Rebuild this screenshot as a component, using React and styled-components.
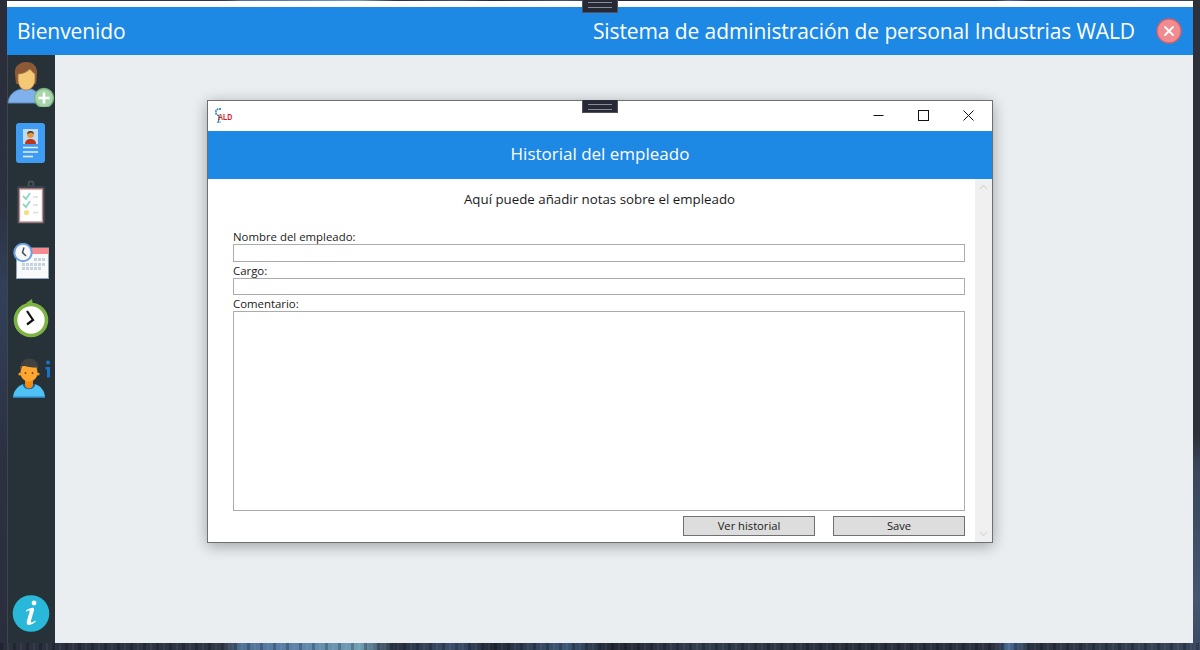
import React from "react";
import styled, { createGlobalStyle } from "styled-components";

const Global = createGlobalStyle`
  html, body { margin: 0; padding: 0; background: #262a36; }
  * { box-sizing: border-box; }
`;

const Desktop = styled.div`
  position: relative;
  width: 1200px;
  height: 650px;
  overflow: hidden;
  padding: 1px 7px 7px;
  font-family: "Open Sans", "Noto Sans", sans-serif;
  background:
    repeating-linear-gradient(90deg, rgba(0, 0, 0, 0.22) 0 3px, transparent 3px 7px, rgba(255, 255, 255, 0.05) 7px 9px, transparent 9px 13px) left bottom / 100% 7px no-repeat,
    linear-gradient(180deg, #2e313b 0, #2e313b 67%, #39465b 72%, #465670 92%, #3b4a62 100%) right top / 7px 100% no-repeat,
    linear-gradient(180deg, #2a2c38 0, #2c3040 30%, #33405a 45%, #2c3142 70%, #2a2e3c 100%) left top / 7px 100% no-repeat,
    linear-gradient(90deg,
      #2b303e 0, #2f3646 18%, #3a4454 19%, #4f7196 20%, #5d84ac 25%, #6fa0b4 30%, #2a3040 33%, #3c5170 38%,
      #242834 41%, #3d5878 47%, #242834 51%, #333d4e 58%, #2a2f3c 70%, #2c3240 83%, #4a6c96 84%, #2c3240 86%, #39465b 100%);
`;

const AppWindow = styled.div`
  display: flex;
  flex-direction: column;
  width: 1186px;
  height: 642px;
`;

const TopStrip = styled.div`
  height: 6px;
  background: #fff;
`;

const Header = styled.header`
  display: flex;
  align-items: center;
  height: 48px;
  padding: 0 11px 0 10px;
  background: #1e88e5;
  color: #fff;
`;

const WelcomeText = styled.div`
  font-size: 21px;
  line-height: 48px;
  letter-spacing: -0.1px;
`;

const SystemTitle = styled.div`
  margin-left: auto;
  margin-right: 21px;
  font-size: 21px;
  line-height: 48px;
  letter-spacing: -0.1px;
`;

const CloseCircle = styled.svg`
  display: block;
  width: 26px;
  height: 26px;
`;

const Handle = styled.div`
  position: absolute;
  left: 582px;
  top: ${(p) => p.$top}px;
  width: 36px;
  height: 13px;
  background: #272a36;
  border: 1px solid #4f525c;
  border-top: 0;
  &::before {
    content: "";
    display: block;
    width: 24px;
    height: 4px;
    margin: ${(p) => p.$inset}px auto 0;
    border-top: 1px solid #8a8d96;
    border-bottom: 1px solid #8a8d96;
  }
`;

const Workspace = styled.div`
  display: flex;
  flex: 1;
  min-height: 0;
`;

const Rail = styled.nav`
  display: flex;
  flex-direction: column;
  gap: 16px;
  width: 48px;
  padding: 6px 0 11px;
  background: #263238;
  border-left: 1px solid #3c464c;
`;

const RailIcon = styled.svg`
  display: block;
  flex: none;
  width: 48px;
  margin-left: -1px;
  height: ${(p) => p.$h}px;
`;

const RailBottom = styled.div`
  margin-top: auto;
`;

const Main = styled.main`
  flex: 1;
  background: #eaeef1;
  padding: 45px 0 0 152px;
`;

const Dialog = styled.section`
  display: flex;
  flex-direction: column;
  width: 786px;
  height: 443px;
  background: #fff;
  border: 1px solid #6f6f6f;
  box-shadow: 0 3px 14px rgba(0, 0, 0, 0.32);
`;

const TitleBar = styled.div`
  display: flex;
  align-items: center;
  justify-content: space-between;
  height: 30px;
  padding: 0 1px 2px 7px;
  background: #fff;
`;

const WindowButtons = styled.div`
  display: flex;
`;

const WindowButton = styled.div`
  display: flex;
  align-items: center;
  justify-content: center;
  width: 45px;
  height: 28px;
`;

const Band = styled.div`
  height: 48px;
  line-height: 46px;
  text-align: center;
  font-size: 17px;
  color: #fff;
  background: #1e88e5;
`;

const DialogBody = styled.div`
  display: flex;
  flex: 1;
  min-height: 0;
`;

const Content = styled.div`
  flex: 1;
  padding: 11px 9px 0 25px;
`;

const Intro = styled.p`
  margin: 0 0 22px;
  text-align: center;
  font-size: 13.3px;
  line-height: 18px;
  color: #1a1a1a;
`;

const FieldLabel = styled.label`
  display: block;
  height: 14px;
  font-size: 11.4px;
  line-height: 14px;
  color: #1a1a1a;
  margin-top: ${(p) => p.$top || 0}px;
`;

const TextField = styled.input`
  display: block;
  width: 732px;
  height: ${(p) => p.$h}px;
  margin: 0;
  padding: 0;
  background: #fff;
  border: 1px solid #ababab;
  border-radius: 0;
  outline: 0;
`;

const CommentArea = styled.textarea`
  display: block;
  width: 732px;
  height: 200px;
  margin: 0;
  padding: 0;
  resize: none;
  background: #fff;
  border: 1px solid #ababab;
  border-radius: 0;
  outline: 0;
`;

const Actions = styled.div`
  display: flex;
  justify-content: flex-end;
  gap: 18px;
  width: 732px;
  margin-top: 5px;
`;

const ActionButton = styled.button`
  width: 132px;
  height: 20px;
  padding: 0;
  font-family: inherit;
  font-size: 11.2px;
  line-height: 18px;
  color: #1a1a1a;
  background: #dddddd;
  border: 1px solid #707070;
  border-radius: 0;
`;

const ScrollTrack = styled.div`
  display: flex;
  flex-direction: column;
  justify-content: space-between;
  align-items: center;
  width: 17px;
  padding: 5px 0;
  background: #f0f0f0;
`;

const Chevron = ({ up }) => (
  <svg width="9" height="6" viewBox="0 0 9 6">
    <path d={up ? "M1 5 L4.5 1.5 L8 5" : "M1 1 L4.5 4.5 L8 1"} fill="none" stroke="#d8d8d8" strokeWidth="1.2" />
  </svg>
);

const UserAddIcon = () => (
  <RailIcon $h={46} viewBox="7 61 48 46">
    <path d="M8 103 C9 93 16 90 22 89 L31 89 C37 91 40 95 41 103 Z" fill="#80b1ec" stroke="#5c86b8" strokeWidth="1" />
    <path d="M15 74 C14 65 21 62 26 62 C33 62 38 66 37 75 L36 84 L16 84 Z" fill="#8d5a38" />
    <path d="M18 74 C22 74 27 72 30 69 C32 72 34 73 35 74 L35 81 C34 87 30 90 26 90 C22 90 19 87 18 81 Z" fill="#f4c875" stroke="#a47a3f" strokeWidth="0.8" />
    <circle cx="44" cy="98" r="9.5" fill="#a6d5a9" stroke="#79b180" strokeWidth="1.4" />
    <path d="M38.5 98 H49.5 M44 92.5 V103.5" stroke="#fff" strokeWidth="2.6" />
  </RailIcon>
);

const CardIcon = () => (
  <RailIcon $h={40} viewBox="7 123 48 40">
    <rect x="16" y="123" width="29" height="40" rx="3" fill="#3f9cf3" />
    <rect x="23" y="129" width="15" height="15" fill="#bcdcf7" />
    <circle cx="30.5" cy="134.5" r="3.4" fill="#e8973a" />
    <path d="M27 134 C27 130 34 130 34 134 L31 132.5 Z" fill="#4a3a36" />
    <path d="M25 144 C25 140 28 139 30.5 139 C33 139 36 140 36 144 Z" fill="#c23513" />
    <path d="M23 147.5 H38 M23 152 H38" stroke="#e6eef5" strokeWidth="1.6" />
    <path d="M23 156.5 H33" stroke="#e6eef5" strokeWidth="1.6" />
  </RailIcon>
);

const ClipboardIcon = () => (
  <RailIcon $h={48} viewBox="7 179 48 48">
    <circle cx="31" cy="184" r="2.6" fill="none" stroke="#46545d" strokeWidth="1.6" />
    <rect x="17" y="186" width="28" height="38" rx="2" fill="#37444c" />
    <rect x="19.5" y="189" width="23" height="33" fill="#fff" stroke="#c98e8f" strokeWidth="1.4" />
    <path d="M23 196 L26 199 L30 193 M23 204 L26 207 L30 201" fill="none" stroke="#90d6c4" strokeWidth="1.8" />
    <circle cx="26.5" cy="212.5" r="2.6" fill="#f6dc86" />
    <path d="M33 197 H38 M33 205 H38 M33 212.5 H38" stroke="#dcdcdc" strokeWidth="1.6" />
  </RailIcon>
);

const CalendarIcon = () => (
  <RailIcon $h={36} viewBox="7 243 48 36">
    <rect x="16.5" y="248" width="32" height="30.5" fill="#f7f9fb" stroke="#8ea5bd" strokeWidth="1" />
    <rect x="17" y="248" width="31.5" height="6" fill="#f58a8f" />
    <g fill="#c6d3df">
      <rect x="34" y="258" width="3" height="3" /><rect x="38" y="258" width="3" height="3" /><rect x="42" y="258" width="3" height="3" />
      <rect x="22" y="263" width="3" height="3" /><rect x="26" y="263" width="3" height="3" /><rect x="30" y="263" width="3" height="3" /><rect x="34" y="263" width="3" height="3" /><rect x="38" y="263" width="3" height="3" /><rect x="42" y="263" width="3" height="3" />
      <rect x="22" y="267" width="3" height="3" /><rect x="26" y="267" width="3" height="3" /><rect x="30" y="267" width="3" height="3" /><rect x="34" y="267" width="3" height="3" /><rect x="38" y="267" width="3" height="3" />
    </g>
    <circle cx="23" cy="252.5" r="8.7" fill="#f6f8fb" stroke="#6f9edd" strokeWidth="2" />
    <path d="M24 247.5 L22.5 252.5 L26 256" fill="none" stroke="#3b4650" strokeWidth="1.4" />
  </RailIcon>
);

const ClockIcon = () => (
  <RailIcon $h={45} viewBox="7 295 48 45">
    <circle cx="31" cy="320" r="15.5" fill="#fff" stroke="#7cb342" strokeWidth="3.6" />
    <path d="M32 299 L26 303 L33 305.5 Z" fill="#7cb342" />
    <path d="M27 311 L33 320 L27 324.5" fill="none" stroke="#111" strokeWidth="2.2" />
  </RailIcon>
);

const PersonInfoIcon = () => (
  <RailIcon $h={46} viewBox="7 356 48 46">
    <path d="M13 398 C13 391 18 386 23 384 L35 384 C41 386 45 391 45 398 Z" fill="#4fc1f5" />
    <path d="M13 396.5 H45 L45 398 H13 Z" fill="#2a7fb8" />
    <path d="M22.5 384 C24 391 34 391 35.5 384 Z" fill="#0f5f9e" />
    <path d="M25 379 H33 V385 C33 389.5 25 389.5 25 385 Z" fill="#f58a12" />
    <circle cx="20" cy="374" r="1.6" fill="#f09a28" />
    <circle cx="38" cy="374" r="1.6" fill="#f09a28" />
    <path d="M20.5 366 H37.5 V373 C37.5 378 33 381.5 29 381.5 C25 381.5 20.5 378 20.5 373 Z" fill="#ffa72e" />
    <path d="M20.5 373 C19 362 24 358.5 29.5 358.5 C35 358.5 39.5 362 37.5 373 L36.5 367.5 C32 367.5 26 367 23 365 L21.5 368 Z" fill="#424242" />
    <circle cx="25.5" cy="373" r="0.9" fill="#6b3f10" />
    <circle cx="32.5" cy="373" r="0.9" fill="#6b3f10" />
    <circle cx="48" cy="362.5" r="2" fill="#1a73c9" />
    <path d="M45.5 367 H50 V377.5 H47 V369.5 H45.5 Z" fill="#1a73c9" />
  </RailIcon>
);

const InfoIcon = () => (
  <RailIcon $h={37} viewBox="7 595.5 48 37">
    <circle cx="31" cy="614" r="18.3" fill="#29b8d9" />
    <circle cx="34" cy="603.5" r="2.4" fill="#fff" />
    <path d="M26 611 C29 609 32 608 33.5 608.5 C34.5 609 34 611 33.5 612.5 L31 621 C30.5 623 31.5 623.5 33 622.5 L35.5 621 L35.8 622 C33 624.5 30 626 28 625.5 C26.5 625 26.5 623 27 621 L29.5 612.5 C29.8 611 29 610.8 28 611.3 L26.3 612.2 Z" fill="#fff" />
  </RailIcon>
);

const WaldLogo = () => (
  <svg width="18" height="15" viewBox="0 0 18 15" style={{ display: "block" }}>
    <path d="M6 1 H3 L1 2.5 V6 L4 8 V11 L3 14 H5.5" fill="none" stroke="#1977b8" strokeWidth="1.4" strokeDasharray="2 0.6" />
    <text transform="translate(3 11.5) scale(1 1.3)" fontFamily="Liberation Sans, sans-serif" fontSize="7" fontWeight="700" fill="#d3232b">ALD</text>
  </svg>
);

export default function App() {
  return (
    <>
      <Global />
      <Desktop>
        <AppWindow>
          <TopStrip />
          <Header>
            <WelcomeText>Bienvenido</WelcomeText>
            <SystemTitle>Sistema de administración de personal Industrias WALD</SystemTitle>
            <CloseCircle viewBox="0 0 26 26">
              <circle cx="13" cy="13" r="12" fill="#f28b8f" stroke="#d35f68" strokeWidth="1.3" />
              <path d="M9 9 L17 17 M17 9 L9 17" stroke="#fff" strokeWidth="1.8" strokeLinecap="round" />
            </CloseCircle>
          </Header>
          <Workspace>
            <Rail>
              <UserAddIcon />
              <CardIcon />
              <ClipboardIcon />
              <CalendarIcon />
              <ClockIcon />
              <PersonInfoIcon />
              <RailBottom>
                <InfoIcon />
              </RailBottom>
            </Rail>
            <Main>
              <Dialog>
                <TitleBar>
                  <WaldLogo />
                  <WindowButtons>
                    <WindowButton>
                      <svg width="11" height="11" viewBox="0 0 11 11"><path d="M0.5 5.5 H10.5" stroke="#111" strokeWidth="1" /></svg>
                    </WindowButton>
                    <WindowButton>
                      <svg width="11" height="11" viewBox="0 0 11 11"><rect x="0.5" y="0.5" width="10" height="10" fill="none" stroke="#111" strokeWidth="1" /></svg>
                    </WindowButton>
                    <WindowButton>
                      <svg width="11" height="11" viewBox="0 0 11 11"><path d="M0.5 0.5 L10.5 10.5 M10.5 0.5 L0.5 10.5" stroke="#111" strokeWidth="1" /></svg>
                    </WindowButton>
                  </WindowButtons>
                </TitleBar>
                <Band>Historial del empleado</Band>
                <DialogBody>
                  <Content>
                    <Intro>Aquí puede añadir notas sobre el empleado</Intro>
                    <FieldLabel>Nombre del empleado:</FieldLabel>
                    <TextField $h={18} readOnly />
                    <FieldLabel $top={2}>Cargo:</FieldLabel>
                    <TextField $h={17} readOnly />
                    <FieldLabel $top={2}>Comentario:</FieldLabel>
                    <CommentArea readOnly />
                    <Actions>
                      <ActionButton>Ver historial</ActionButton>
                      <ActionButton>Save</ActionButton>
                    </Actions>
                  </Content>
                  <ScrollTrack>
                    <Chevron up />
                    <Chevron />
                  </ScrollTrack>
                </DialogBody>
              </Dialog>
            </Main>
          </Workspace>
        </AppWindow>
        <Handle $top={0} $inset={2} />
        <Handle $top={100} $inset={4} />
      </Desktop>
    </>
  );
}
